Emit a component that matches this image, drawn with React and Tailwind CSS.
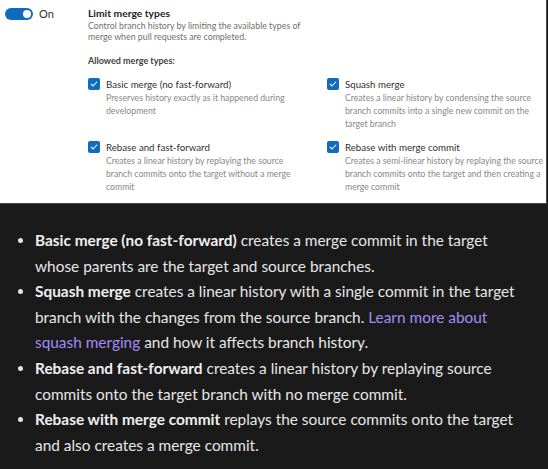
import React from "react";

const merges = [
  {
    name: "Basic merge (no fast-forward)",
    desc: ["Preserves history exactly as it happened during", "development"],
  },
  {
    name: "Squash merge",
    desc: [
      "Creates a linear history by condensing the source",
      "branch commits into a single new commit on the",
      "target branch",
    ],
  },
  {
    name: "Rebase and fast-forward",
    desc: [
      "Creates a linear history by replaying the source",
      "branch commits onto the target without a merge",
      "commit",
    ],
  },
  {
    name: "Rebase with merge commit",
    desc: [
      "Creates a semi-linear history by replaying the source",
      "branch commits onto the target and then creating a",
      "merge commit",
    ],
  },
];

function Check() {
  return (
    <div className="mt-px flex h-[12px] w-[12px] shrink-0 items-center justify-center rounded-[2px] bg-[#0f6cbd]">
      <svg width="8" height="8" viewBox="0 0 8 8" fill="none">
        <path d="M1.2 4.2 L3.1 6 L6.8 2" stroke="white" strokeWidth="1.1" strokeLinecap="round" strokeLinejoin="round" />
      </svg>
    </div>
  );
}

export default function App() {
  return (
    <div className="h-[469px] w-[548px] overflow-hidden bg-[#1a1a1a]" style={{ fontFamily: "Lato, 'Noto Sans', sans-serif" }}>
      {/* settings screenshot */}
      <div className="flex h-[204px] w-[547px] border-r border-b border-[#4a4a4a] bg-white pl-[5px] pt-[7px]">
        <div className="flex w-[83px] shrink-0 items-start gap-[6px] pt-px">
          <div className="flex h-[12px] w-[28px] items-center justify-end rounded-full bg-[#0f6cbd] pr-[2px]">
            <div className="h-[8px] w-[8px] rounded-full bg-white" />
          </div>
          <span className="text-[11px] leading-[12px] text-[#323130]">On</span>
        </div>

        <div className="flex-1">
          <div className="text-[10.3px] font-bold leading-[13px] text-[#242424]">Limit merge types</div>
          <p className="whitespace-nowrap text-[8.8px] leading-[11px] text-[#707070]">
            <span className="block">Control branch history by limiting the available types of</span>
            <span className="block">merge when pull requests are completed.</span>
          </p>
          <div className="mt-[13px] text-[9px] font-bold leading-[12px] text-[#424242]">Allowed merge types:</div>

          <div className="mt-[10px] grid grid-cols-[239px_1fr] gap-y-[10px]">
            {merges.map((m) => (
              <div key={m.name} className="flex gap-[6px]">
                <Check />
                <div>
                  <div className="text-[9.7px] leading-[14px] text-[#323130]">{m.name}</div>
                  <p className="whitespace-nowrap text-[8.7px] leading-[13px] text-[#8a8886]">
                    {m.desc.map((line) => (
                      <span key={line} className="block">
                        {line}
                      </span>
                    ))}
                  </p>
                </div>
              </div>
            ))}
          </div>
        </div>
      </div>

      {/* explanation */}
      <ul className="mt-[24px] w-[525px] list-disc pl-[35px] text-[15.4px] leading-[25.6px] text-[#e6e6e6]">
        <li>
          <b className="font-bold text-[#f0f0f0]">Basic merge (no fast-forward)</b> creates a merge commit in the target whose
          parents are the target and source branches.
        </li>
        <li>
          <b className="font-bold text-[#f0f0f0]">Squash merge</b> creates a linear history with a single commit in the target
          branch with the changes from the source branch.{" "}
          <a className="text-[#a28bf8]">Learn more about squash merging</a> and how it affects branch history.
        </li>
        <li>
          <b className="font-bold text-[#f0f0f0]">Rebase and fast-forward</b> creates a linear history by replaying source
          commits onto the target branch with no merge commit.
        </li>
        <li>
          <b className="font-bold text-[#f0f0f0]">Rebase with merge commit</b> replays the source commits onto the target and
          also creates a merge commit.
        </li>
      </ul>
    </div>
  );
}
